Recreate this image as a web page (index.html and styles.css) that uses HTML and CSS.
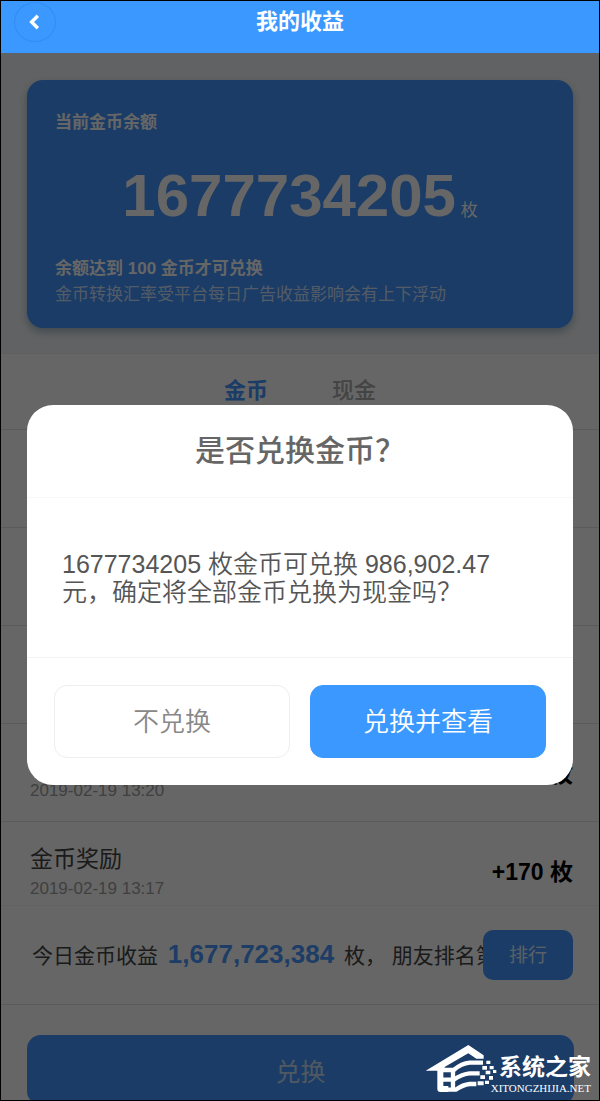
FILE: index.html
```
<!DOCTYPE html>
<html lang="zh-CN">
<head>
  <meta charset="UTF-8">
  <meta name="viewport" content="width=device-width, initial-scale=1.0">
  <title>我的收益</title>
  <link rel="stylesheet" href="styles.css">
</head>
<body>
  <div class="app">
    <header class="header">
      <button class="header__back" type="button" aria-label="返回">
        <svg viewBox="0 0 16 16" width="18" height="18"><path d="M10.5 2.5 L5 8 L10.5 13.5" fill="none" stroke="#fff" stroke-width="3"/></svg>
      </button>
      <h1 class="header__title">我的收益</h1>
    </header>

    <div class="page">
      <main class="content">
        <section class="balance">
          <div class="balance-card">
            <div class="balance-card__label">当前金币余额</div>
            <div class="balance-card__amount"><strong>1677734205</strong> <span>枚</span></div>
            <div class="balance-card__rule">余额达到 100 金币才可兑换</div>
            <div class="balance-card__note">金币转换汇率受平台每日广告收益影响会有上下浮动</div>
          </div>
        </section>

        <nav class="tabs">
          <a class="tab tab--active" href="#coin">金币</a>
          <a class="tab" href="#cash">现金</a>
        </nav>

        <ul class="records">
          <li class="record"></li>
          <li class="record"></li>
          <li class="record"></li>
          <li class="record">
            <div>
              <div class="record__title">金币奖励</div>
              <div class="record__time">2019-02-19 13:20</div>
            </div>
            <div class="record__amount">+170 枚</div>
          </li>
          <li class="record">
            <div>
              <div class="record__title">金币奖励</div>
              <div class="record__time">2019-02-19 13:17</div>
            </div>
            <div class="record__amount">+170 枚</div>
          </li>
        </ul>

        <div class="today">
          <div class="today__text">今日金币收益 <strong>1,677,723,384</strong> 枚， 朋友排名第</div>
          <button class="today__rank" type="button">排行</button>
        </div>

        <div class="bottom">
          <button class="bottom__exchange" type="button">兑换</button>
        </div>
      </main>

      <div class="mask"></div>
    </div>

    <div class="dialog" role="dialog" aria-labelledby="dialog-title">
      <h2 class="dialog__title" id="dialog-title">是否兑换金币？</h2>
      <p class="dialog__text">1677734205 枚金币可兑换 986,902.47 元，确定将全部金币兑换为现金吗？</p>
      <div class="dialog__buttons">
        <button class="dialog-button" type="button">不兑换</button>
        <button class="dialog-button dialog-button--primary" type="button">兑换并查看</button>
      </div>
    </div>

    <div class="watermark">
      <svg class="watermark__logo" viewBox="12 12 216 144" width="72" height="48">
        <path fill="#fff" d="M14 92 L142 15 L188 46 V56 H166 L142 40 L72 80 L66 92 Z"/>
        <g fill="none" stroke="#fff" stroke-width="13">
          <path stroke-width="18" stroke-linejoin="round" d="M58 86 V147 H82"/>
          <path d="M96 92 V150"/>
          <path d="M60 90 H98 Q122 70 146 68 H186"/>
          <path d="M60 119 H98 Q124 102 146 100 H176"/>
          <path d="M80 149 H104 Q126 134 146 132 H166"/>
        </g>
        <path fill="#fff" d="M196 62h12v10h-12z M184 78h14v11h-14z M206 78h12v10h-12z M194 92h14v11h-14z M216 90h10v9h-10z M178 106h14v11h-14z M204 108h12v11h-12z M170 124h18v12h-18z M192 122h12v10h-12z"/>
      </svg>
      <div class="watermark__text">
        <div class="watermark__name">系统之家</div>
        <div class="watermark__site">XITONGZHIJIA.NET</div>
      </div>
    </div>
  </div>
</body>
</html>
```
FILE: styles.css
```
* {
  box-sizing: border-box;
}

body {
  margin: 0;
  font-family: "Liberation Sans", "Noto Sans CJK SC", sans-serif;
}

h1, h2, p, ul {
  margin: 0;
  padding: 0;
}

button {
  border: 0;
  padding: 0;
  font-family: inherit;
  cursor: pointer;
}

.app {
  position: relative;
  display: flex;
  flex-direction: column;
  height: 100vh;
  overflow: hidden;
  border: 1px solid #000;
}

/* Header */
.header {
  flex: none;
  display: grid;
  grid-template-columns: 42px 1fr 42px;
  align-items: center;
  height: 52px;
  padding: 0 13px 10px;
  background: #3b98ff;
}

.header__back {
  display: flex;
  align-items: center;
  justify-content: center;
  width: 42px;
  height: 40px;
  border: 1px solid #338df3;
  border-radius: 50%;
  background: transparent;
}

.header__title {
  color: #fff;
  font-size: 22px;
  line-height: 30px;
  text-align: center;
}

/* Page */
.page {
  position: relative;
  flex: 1;
  min-height: 0;
}

.content {
  display: flex;
  flex-direction: column;
  height: 100%;
  overflow: hidden;
  background: #fff;
}

.mask {
  position: absolute;
  inset: 0;
  background: rgba(0, 0, 0, .6);
}

.balance {
  flex: none;
  padding: 27px 26px 25px;
  background: #f3f5f7;
  border-bottom: 1px solid #eceef0;
}

.balance-card {
  height: 248px;
  padding: 30px 28px;
  border-radius: 16px;
  background: #4196ff;
  color: #fff;
  font-size: 17px;
  line-height: 26px;
  box-shadow: 0 4px 8px rgba(40, 90, 130, .4);
}

.balance-card__label,
.balance-card__rule {
  font-weight: bold;
}

.balance-card__amount {
  height: 120px;
  line-height: 120px;
  text-align: center;
}

.balance-card__amount strong {
  font-size: 60px;
}

.balance-card__note {
  color: rgba(255, 255, 255, .75);
}

/* Tabs */
.tabs {
  flex: none;
  display: flex;
  justify-content: center;
  gap: 64px;
  height: 76px;
  border-bottom: 1px solid #e4e4e4;
}

.tab {
  color: #aaa;
  font-size: 22px;
  line-height: 74px;
  font-weight: 500;
  text-decoration: none;
}

.tab--active {
  color: #4196ff;
  font-weight: bold;
}

/* Records */
.records {
  flex: 1;
  min-height: 0;
  overflow: hidden;
  list-style: none;
}

.record {
  display: flex;
  align-items: center;
  justify-content: space-between;
  height: 98px;
  padding: 2px 26px 0 29px;
  border-bottom: 1px solid #e4e4e4;
}

.record__title {
  color: #444;
  font-size: 23px;
  line-height: 34px;
}

.record__time {
  color: #a0a0a0;
  font-size: 17px;
  line-height: 26px;
}

.record__amount {
  color: #000;
  font-size: 23px;
  font-weight: bold;
  line-height: 28px;
}

/* Today's income */
.today {
  flex: none;
  display: flex;
  align-items: center;
  height: 100px;
  padding: 0 26px 0 31px;
  border-top: 1px solid #f4f4f4;
  border-bottom: 1px solid #e4e4e4;
}

.today__text {
  flex: 1;
  min-width: 0;
  color: #444;
  font-size: 21px;
  line-height: 30px;
  white-space: nowrap;
}

.today__text strong {
  margin: 0 4px;
  color: #4b9aff;
  font-size: 26px;
}

/* sits over the end of the text when the line is too long */
.today__rank {
  position: relative;
  flex: none;
  width: 90px;
  height: 50px;
  padding-bottom: 4px;
  border-radius: 10px;
  background: #4196ff;
  color: #e0f0ff;
  font-size: 19px;
}

.bottom {
  flex: none;
  height: 95px;
  padding: 30px 25px 0 26px;
}

.bottom__exchange {
  width: 100%;
  height: 70px;
  border-radius: 14px;
  background: #4196ff;
  color: #c8dcf4;
  font-size: 25px;
}

/* Dialog */
.dialog {
  position: absolute;
  top: 404px;
  left: 26px;
  right: 26px;
  border-radius: 26px;
  background: #fff;
}

.dialog__title {
  color: #666;
  font-size: 30px;
  font-weight: 500;
  line-height: 92px;
  text-align: center;
  border-bottom: 1px solid #f7f7f7;
}

.dialog__text {
  padding: 52px 35px 51px;
  color: #555;
  font-size: 25px;
  font-weight: 350;
  line-height: 28px;
}

.dialog__buttons {
  display: flex;
  gap: 20px;
  padding: 27px;
  border-top: 1px solid #f2f2f2;
}

.dialog-button {
  flex: 1;
  height: 73px;
  padding-bottom: 4px;
  border: 1px solid #eee;
  border-radius: 13px;
  background: #fff;
  color: #888;
  font-size: 26px;
  font-weight: 350;
}

.dialog-button--primary {
  border-color: #3b98ff;
  background: #3b98ff;
  color: #fff;
}

/* Watermark */
.watermark {
  position: absolute;
  right: 8px;
  bottom: 5px;
  display: flex;
  align-items: flex-end;
  color: #fff;
}

.watermark__logo {
  margin: 0 -6px 3px 0;
}

.watermark__text {
  display: flex;
  flex-direction: column;
  align-items: flex-end;
}

.watermark__name {
  font-size: 23px;
  font-weight: bold;
  line-height: 28px;
}

.watermark__site {
  font-family: "Liberation Serif", serif;
  font-size: 11px;
  line-height: 14px;
}
```
